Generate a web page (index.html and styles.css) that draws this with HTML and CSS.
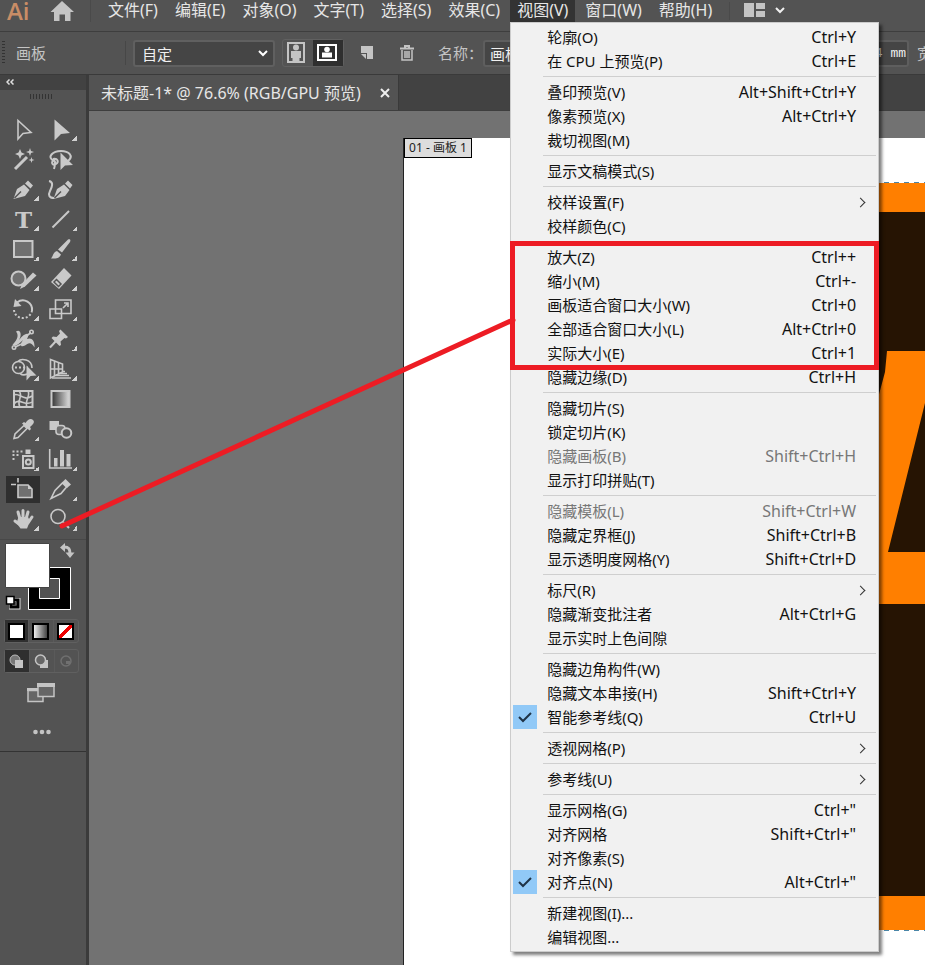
FILE: index.html
```html
<!DOCTYPE html>
<html lang="zh-CN">
<head>
<meta charset="utf-8">
<title>未标题-1</title>
<link rel="stylesheet" href="styles.css">
</head>
<body>
<header class="menubar">
  <span class="logo">Ai</span>
  <button class="home" aria-label="主页"><svg width="24" height="22" viewBox="0 0 24 22"><path d="M12 1 24 12H20.500V21H15V14.500H9.500V21H4V12H0.500Z" fill="#c4c4c4"/></svg></button>
  <nav class="menus">
    <button>文件(F)</button>
    <button>编辑(E)</button>
    <button>对象(O)</button>
    <button>文字(T)</button>
    <button>选择(S)</button>
    <button>效果(C)</button>
    <div class="open-menu">
      <button class="active" aria-expanded="true">视图(V)</button>
      <div class="dropdown" role="menu">
        <div class="group">
          <button class="item"><span>轮廓(O)</span><kbd>Ctrl+Y</kbd></button>
          <button class="item"><span>在 CPU 上预览(P)</span><kbd>Ctrl+E</kbd></button>
        </div>
        <div class="group">
          <button class="item"><span>叠印预览(V)</span><kbd>Alt+Shift+Ctrl+Y</kbd></button>
          <button class="item"><span>像素预览(X)</span><kbd>Alt+Ctrl+Y</kbd></button>
          <button class="item"><span>裁切视图(M)</span></button>
        </div>
        <div class="group">
          <button class="item"><span>显示文稿模式(S)</span></button>
        </div>
        <div class="group">
          <button class="item sub"><span>校样设置(F)</span></button>
          <button class="item"><span>校样颜色(C)</span></button>
        </div>
        <div class="group">
          <div class="marked">
            <button class="item"><span>放大(Z)</span><kbd>Ctrl++</kbd></button>
            <button class="item"><span>缩小(M)</span><kbd>Ctrl+-</kbd></button>
            <button class="item"><span>画板适合窗口大小(W)</span><kbd>Ctrl+0</kbd></button>
            <button class="item"><span>全部适合窗口大小(L)</span><kbd>Alt+Ctrl+0</kbd></button>
            <button class="item"><span>实际大小(E)</span><kbd>Ctrl+1</kbd></button>
          </div>
          <button class="item"><span>隐藏边缘(D)</span><kbd>Ctrl+H</kbd></button>
        </div>
        <div class="group">
          <button class="item"><span>隐藏切片(S)</span></button>
          <button class="item"><span>锁定切片(K)</span></button>
          <button class="item" disabled><span>隐藏画板(B)</span><kbd>Shift+Ctrl+H</kbd></button>
          <button class="item"><span>显示打印拼贴(T)</span></button>
        </div>
        <div class="group">
          <button class="item" disabled><span>隐藏模板(L)</span><kbd>Shift+Ctrl+W</kbd></button>
          <button class="item"><span>隐藏定界框(J)</span><kbd>Shift+Ctrl+B</kbd></button>
          <button class="item"><span>显示透明度网格(Y)</span><kbd>Shift+Ctrl+D</kbd></button>
        </div>
        <div class="group">
          <button class="item sub"><span>标尺(R)</span></button>
          <button class="item"><span>隐藏渐变批注者</span><kbd>Alt+Ctrl+G</kbd></button>
          <button class="item"><span>显示实时上色间隙</span></button>
        </div>
        <div class="group">
          <button class="item"><span>隐藏边角构件(W)</span></button>
          <button class="item"><span>隐藏文本串接(H)</span><kbd>Shift+Ctrl+Y</kbd></button>
          <button class="item checked"><svg class="check" viewBox="0 0 24 24"><path d="M6 12l4 4 8-8"/></svg><span>智能参考线(Q)</span><kbd>Ctrl+U</kbd></button>
        </div>
        <div class="group">
          <button class="item sub"><span>透视网格(P)</span></button>
        </div>
        <div class="group">
          <button class="item sub"><span>参考线(U)</span></button>
        </div>
        <div class="group">
          <button class="item"><span>显示网格(G)</span><kbd>Ctrl+"</kbd></button>
          <button class="item"><span>对齐网格</span><kbd>Shift+Ctrl+"</kbd></button>
          <button class="item"><span>对齐像素(S)</span></button>
          <button class="item checked"><svg class="check" viewBox="0 0 24 24"><path d="M6 12l4 4 8-8"/></svg><span>对齐点(N)</span><kbd>Alt+Ctrl+"</kbd></button>
        </div>
        <div class="group">
          <button class="item"><span>新建视图(I)...</span></button>
          <button class="item"><span>编辑视图...</span></button>
        </div>
      </div>
    </div>
    <button>窗口(W)</button>
    <button>帮助(H)</button>
  </nav>
  <button class="layout" aria-label="工作区"><svg width="44" height="16" viewBox="0 0 44 16"><path d="M0 1H10V15H0ZM12 1H21V7H12ZM12 9H21V15H12Z" fill="#c4c4c4"/><path d="M32 6l4 4 4-4" fill="none" stroke="#f0f0f0" stroke-width="2"/></svg></button>
</header>

<div class="control">
  <i class="handle"></i>
  <span class="mode">画板</span>
  <select class="preset" aria-label="预设"><option>自定</option></select>
  <div class="orient">
    <button aria-label="纵向"><svg width="30" height="26" viewBox="0 0 30 26"><rect x="5" y="3" width="16" height="19" fill="none" stroke="#c4c4c4" stroke-width="2"/><circle cx="13" cy="7.500" r="3" fill="#c4c4c4"/><path d="M8 11H18V18H16.500V21H9.500V18H8Z" fill="#c4c4c4"/></svg></button>
    <button class="on" aria-label="横向"><svg width="30" height="26" viewBox="0 0 30 26"><rect x="5" y="5" width="18" height="15" fill="none" stroke="#fff" stroke-width="2"/><circle cx="14" cy="9.500" r="2.800" fill="#fff"/><path d="M9 12.500H19V17.500H9Z" fill="#fff"/></svg></button>
  </div>
  <button class="tool-a" aria-label="新建画板"><svg width="14" height="14" viewBox="0 0 14 14"><path d="M1 0H13V13H7V7H1Z" fill="#c4c4c4"/><path d="M1 8H6V13Z" fill="#c4c4c4"/></svg></button>
  <button class="tool-b" aria-label="删除画板"><svg width="14" height="16" viewBox="0 0 14 16" fill="none" stroke="#c4c4c4"><path d="M0 3.500H14M5 3V1H9V3" stroke-width="2"/><path d="M2 5V15H12V5M5 6V13M7 6V13M9 6V13" stroke-width="1.500"/></svg></button>
  <label class="name" for="name">名称：</label>
  <input class="field" id="name" value="画板 1">
  <input class="field coord" aria-label="坐标" value="214 mm">
  <span class="width">宽</span>
</div>

<main class="work">
  <aside class="tools">
    <div class="collapse"><svg width="8" height="6" viewBox="0 0 8 6" fill="none" stroke="#ddd" stroke-width="1.500"><path d="M3.500 0.500 1 3 3.500 5.500M7.500 0.500 5 3 7.500 5.500"/></svg></div>
    <i class="grip"></i>
    <div class="grid">
      <button aria-label="选择"><svg viewBox="0 0 34 30"><path class="l w1" d="M12 6.500V25L17 19.500 25 18.500Z"/></svg></button>
      <button class="more" aria-label="直接选择"><svg viewBox="0 0 34 30"><path d="M10.500 5.500V26.500L17 20 26 19Z"/></svg></button>
      <button aria-label="魔棒"><svg viewBox="0 0 34 30"><path class="l w3" d="M9 25 21 13"/><path d="M14 5 15.500 8.500 19 10 15.500 11.500 14 15 12.500 11.500 9 10 12.500 8.500ZM24 4 25 7 28 8 25 9 24 12 23 9 20 8 23 7ZM25.500 13 26.200 15.300 28.500 16 26.200 16.700 25.500 19 24.800 16.700 22.500 16 24.800 15.300Z"/></svg></button>
      <button aria-label="套索"><svg viewBox="0 0 34 30"><path class="l" d="M10 17C2 13 9 7 17 7S30 12 24 17M9 15C14 14 15 18 12 20S7 19 9 17 12 19 10 25"/><path d="M16.500 8.500V26L21 21.500 29 21Z"/></svg></button>
      <button class="more" aria-label="钢笔"><svg viewBox="0 0 34 30"><path d="M7.500 25 11 15 18 10.500 23.500 16 19 22Z M19 9.500 22 6.500 27 11.500 24.500 14.500Z"/><path class="d" d="M8.500 24 15 17.500"/></svg></button>
      <button aria-label="曲率"><svg viewBox="0 0 34 30"><path d="M9.500 25 13 15 20 10.500 25.500 16 21 22Z M21 9.500 24 6.500 28.500 11 26 14.500Z"/><path class="d" d="M10.500 24 17 17.500"/><path class="l" d="M5 7C10 8 8 13 6 17S5 24 10 24"/></svg></button>
      <button class="more" aria-label="文字"><svg viewBox="0 0 34 30"><text x="17.500" y="24" text-anchor="middle">T</text></svg></button>
      <button class="more" aria-label="直线段"><svg viewBox="0 0 34 30"><path class="l" d="M8.500 23.500 25 7"/></svg></button>
      <button class="more" aria-label="矩形"><svg viewBox="0 0 34 30"><path class="l g" d="M8 7H26.500V23H8Z"/></svg></button>
      <button class="more" aria-label="画笔"><svg viewBox="0 0 34 30"><path d="M14 15.500 24 5.500C26 4.500 27 6 26 8L18 18.500ZM13 17 17 20.500C15 25 11 24.500 7 24.500 9 22.500 9 18 13 17Z"/></svg></button>
      <button class="more" aria-label="Shaper"><svg viewBox="0 0 34 30"><circle class="l g" cx="12.500" cy="14.500" r="7"/><path d="M14 25 16 20 27 8.500 30.500 11.500 19 22.500Z"/></svg></button>
      <button class="more" aria-label="橡皮擦"><svg viewBox="0 0 34 30"><path d="M7 18 20 4 27.500 11.500 15 25Z"/><path class="d" d="M10 18 12.500 15.500 17 20 14.500 22.500Z"/></svg></button>
      <button class="more" aria-label="旋转"><svg viewBox="0 0 34 30"><path class="l" d="M11 8.500C18 3 27 9 26 17"/><path d="M7.500 13 9 5 15.500 12Z"/><path class="l dash" d="M8 16C9 26 23 27 26 17"/></svg></button>
      <button class="more" aria-label="比例缩放"><svg viewBox="0 0 34 30"><path class="l w1" d="M11.500 6H27V19.500H11.500Z"/><path class="l w1" d="M6 15H17.500V24.500H6ZM19 14 24 9M20 9H24V13"/></svg></button>
      <button class="more" aria-label="宽度"><svg viewBox="0 0 34 30"><path d="M10 7.500C15 4.500 16 12 13 16 19 8 25 8 21 15 25 13 29 16 28.500 23.500 25 17 22 19 19 21.500 14 24 14 20 17 16 13 20 10 23 6.500 20.500 9.500 18 14 12 10 7.500Z"/><path class="l w1" d="M9 23 18 19M25 8.500 18 14"/><circle class="l w1" cx="8" cy="23.500" r="1.700"/><circle class="l w1" cx="25.500" cy="8" r="1.700"/></svg></button>
      <button class="more" aria-label="操控变形"><svg viewBox="0 0 34 30"><path d="M16.500 5.500 24 13 22 14.500 20.500 14 16.500 17.500 17 21 15.500 22 7.500 14 9 12.500 12.500 13 16 9.500 15 7Z"/><path class="l" d="M6 23.500 12 17"/></svg></button>
      <button class="more" aria-label="形状生成器"><svg viewBox="0 0 34 30"><circle class="l w1" cx="12.500" cy="13.500" r="6"/><path class="l w1" d="M12 7.500C15 4 26 5 26 14M14 19.500C16 21 19 21 21 20"/><path class="l dash" d="M9 13.500H22"/><path d="M20.500 11.500V26.500L24.500 22 30.500 21.500Z"/></svg></button>
      <button class="more" aria-label="透视网格"><svg viewBox="0 0 34 30"><path class="l w1" d="M6.500 5.500 18.500 10V18L6.500 24ZM10.500 7V22M14.500 8V20M6.500 15H18.500"/><path class="l w1" d="M18 17.500H21M15 19.500H23M12 21.500H25M8 24H27"/></svg></button>
      <button aria-label="网格"><svg viewBox="0 0 34 30"><path class="l" d="M8 7H26.500V23H8Z"/><path class="l w1" d="M13 7C18 12 10 17 14 23M22 7C25 12 18 17 21 23M8 11C13 8 18 18 26 12M8 20C13 13 20 23 26 18"/></svg></button>
      <button aria-label="渐变"><svg viewBox="0 0 34 30"><defs><linearGradient id="gt"><stop stop-color="#333"/><stop offset="1" stop-color="#ddd"/></linearGradient></defs><path d="M7.500 7H25.500V23H7.500Z" fill="url(#gt)" stroke="#c9c9c9" stroke-width="2"/></svg></button>
      <button class="more" aria-label="吸管"><svg viewBox="0 0 34 30"><path class="l w1" d="M8 24.500 9 20 18 11.500 21 14.500 12 23.500Z"/><path d="M16 9.500 18 8 19.500 9C22 5 25 4 27 6S27.500 10 24 13L25 15 23.500 16.500Z"/></svg></button>
      <button aria-label="混合"><svg viewBox="0 0 34 30"><path d="M5.500 7H15V16H5.500Z"/><rect class="l g w1" x="12" y="11.500" width="9" height="9" rx="3"/><circle class="l g2" cx="22.500" cy="19" r="4.800"/></svg></button>
      <button class="more" aria-label="符号喷枪"><svg viewBox="0 0 34 30"><path class="l" d="M17 12H27.500V24H17Z"/><path d="M19.500 5.500H24.500V10H19.500Z"/><circle class="l" cx="22.300" cy="18" r="2.500"/><path class="l dash" d="M6.500 7.500H18M6.500 11H14M6.500 15H9"/></svg></button>
      <button class="more" aria-label="图表"><svg viewBox="0 0 34 30"><path class="l w1" d="M5.700 5V24H28"/><path d="M10 14H13.500V22.500H10ZM16 6H20V22.500H16ZM22.500 10H26.500V22.500H22.500Z"/></svg></button>
      <button class="on" aria-label="画板"><svg viewBox="0 0 34 30"><path class="l w1 g" d="M12 11H22L26 15V23.500H12Z"/><path d="M22 10.500V15H26Z"/><path class="l w1" d="M5 10.500H10M12 4V8.500"/></svg></button>
      <button class="more" aria-label="切片"><svg viewBox="0 0 34 30"><path class="l w1" d="M7 24.500 11 16.500 18.500 9 22.500 13 17 19.500Z"/><path d="M18 8.500 21.500 5 27 10.500 23 14Z"/></svg></button>
      <button class="more" aria-label="抓手"><svg viewBox="0 0 34 30"><path class="l w3" stroke-linecap="round" d="M12 8 14 15M17 6.500V15M22 8 20 15M26 13 22 19M9 17 13 20"/><path d="M12.500 13H22L24 17 21 24.500H14.500L10.500 19Z"/></svg></button>
      <button class="more" aria-label="缩放"><svg viewBox="0 0 34 30"><circle class="l w1" cx="14" cy="12.500" r="7"/><path class="l" d="M19 18 25 24"/></svg></button>
    </div>
    <svg class="swatches" viewBox="0 0 86 76" role="img" aria-label="填色和描边">
      <path d="M28.500 27.500H70.500V69.500H28.500Z" fill="#000" stroke="#fff"/>
      <path d="M39.500 38.500H59.500V58.500H39.500Z" fill="#535353" stroke="#fff"/>
      <path d="M5.500 3.500H49.500V47.500H5.500Z" fill="#fff" stroke="#444"/>
      <path d="M64 7C69 7 70 9 70 14" fill="none" stroke="#c4c4c4" stroke-width="3"/><path d="M60 7.500 65 3V12ZM65.500 12.500H74.500L70 18Z" fill="#c4c4c4"/>
      <path d="M11 60H18.500V67.500H11Z" fill="none" stroke="#ddd" stroke-width="4"/><path d="M11 60H18V67H11Z" fill="none" stroke="#000" stroke-width="3"/><path d="M6.500 56.500H14V64H6.500Z" fill="#fff" stroke="#000" stroke-width="1.500"/>
    </svg>
    <div class="seg">
      <button class="on" aria-label="颜色"><i class="chip"></i></button>
      <button aria-label="渐变"><i class="chip grad"></i></button>
      <button aria-label="无"><i class="chip none"></i></button>
    </div>
    <div class="seg draw">
      <button class="on" aria-label="正常绘图"><svg viewBox="0 0 24 22"><circle cx="10" cy="10" r="5" fill="#777" stroke="#bbb"/><path d="M10 10H18V18H10Z" fill="#c4c4c4"/></svg></button>
      <button aria-label="背面绘图"><svg viewBox="0 0 24 22"><path d="M10 10H18V18H10Z" fill="#c4c4c4"/><circle cx="10.500" cy="10" r="5" fill="#666" stroke="#c4c4c4" stroke-width="1.500"/></svg></button>
      <button disabled aria-label="内部绘图"><svg viewBox="0 0 24 22"><circle cx="11" cy="11" r="5" fill="none" stroke="#707070" stroke-width="1.500"/><path d="M11 11H15V14H11Z" fill="#707070"/></svg></button>
    </div>
    <button class="screen" aria-label="更改屏幕模式"><svg width="28" height="20" viewBox="0 0 28 20"><path d="M1 7.500H16V18.500H1Z" fill="#666" stroke="#c4c4c4" stroke-width="1.500"/><path d="M0 5H11V8H0Z" fill="#c4c4c4"/><path d="M11 1.500H27V13.500H11Z" fill="#666" stroke="#c4c4c4" stroke-width="1.500"/><path d="M10 0H28V4H10Z" fill="#c4c4c4"/></svg></button>
    <button class="dots" aria-label="编辑工具栏"><svg width="18" height="6" viewBox="0 0 18 6" fill="#c4c4c4"><circle cx="2.500" cy="3" r="2.300"/><circle cx="9" cy="3" r="2.300"/><circle cx="15.500" cy="3" r="2.300"/></svg></button>
  </aside>
  <section class="doc">
    <div class="tabs"><div class="tab"><span>未标题-1* @ 76.6% (RGB/GPU 预览)</span><button aria-label="关闭"><svg width="10" height="10" viewBox="0 0 10 10"><path d="M1 1 9 9M9 1 1 9" stroke="#eee" stroke-width="2"/></svg></button></div></div>
    <div class="canvas">
      <div class="artboard">
        <span class="board-name">01 - 画板 1</span>
        <svg class="art" viewBox="100 0 321 750">
          <path d="M0 0H421V748H0Z" fill="#ff7f00"/>
          <path d="M0 30H421V169H383L381 190 374 216H0Z" fill="#261403"/>
          <path d="M421 221 384 370H421ZM0 422H421V714H0Z" fill="#261403"/>
          <path d="M0 0.500H421M0 748.500H421" stroke="#fff"/>
          <path d="M0 0.500H421M0 748.500H421" stroke="#4a86a8" stroke-dasharray="5 5"/>
        </svg>
      </div>
    </div>
  </section>
</main>
<svg class="pointer" width="520" height="540" viewBox="0 0 520 540"><path d="M62 526 513 320" stroke="#ed1c24" stroke-width="5" stroke-linecap="round"/></svg>
</body>
</html>
```
FILE: styles.css
```css
* { box-sizing: border-box; }
body {
  margin: 0;
  height: 100vh;
  display: flex;
  flex-direction: column;
  position: relative;
  overflow: hidden;
  background: #535353;
  color: #e6e6e6;
  font: 15px/24px "Noto Sans", "Noto Sans CJK SC", sans-serif;
}
button, input, select { font: inherit; color: inherit; }
button { background: none; border: 0; padding: 0; text-align: left; white-space: nowrap; }
svg { display: block; }

.menubar { display: flex; align-items: center; flex: none; height: 32px; padding-bottom: 9px; border-bottom: 1px solid #3e3e3e; }
.logo { width: 43px; padding-left: 7px; color: #c98d66; font: 600 24px/22px "Open Sans", sans-serif; }
.home { width: 47px; padding-left: 7px; }
.menus { display: flex; gap: 3px; padding: 0 10px; border-left: 1px solid #4a4a4a; }
.menus > button, .active { height: 22px; line-height: 20px; padding: 0 7px 2px; font-size: 16px; }
.active { display: block; background: #333; }
.open-menu { position: relative; }
.layout { padding: 0 0 2px 14px; border-left: 1px solid #4a4a4a; }

.dropdown {
  position: absolute;
  z-index: 5;
  top: 22px;
  left: 0;
  width: 369px;
  padding: 2px;
  background: #f1f1f1;
  border: 1px solid #ccc;
  box-shadow: 3px 3px 3px rgba(0, 0, 0, .5);
  color: #111;
}
.group + .group { padding-top: 7px; background: linear-gradient(#cfcfcf, #cfcfcf) 30px 3px / 333px 1px no-repeat; }
.item { position: relative; display: flex; width: 100%; height: 24px; padding: 0 20px 0 34px; justify-content: space-between; align-items: center; }
.item:disabled { color: #777; }
.item kbd { font: inherit; font-size: 16px; }
.sub::after { content: ""; width: 6px; height: 6px; margin-right: -8px; border: solid #333; border-width: 1px 1px 0 0; transform: rotate(45deg); }
.check { position: absolute; left: 0; top: 0; width: 24px; height: 24px; background: #91c9f7; fill: none; stroke: #1f3347; stroke-width: 2; }
.marked { position: relative; }
.marked::after { content: ""; position: absolute; inset: -4px -3px -5px; border: 5px solid #ed1c24; pointer-events: none; }

.control { display: flex; align-items: center; flex: none; height: 43px; border-bottom: 1px solid #3a3a3a; color: #c4c4c4; overflow: hidden; }
.handle { width: 3px; height: 24px; margin-left: 2px; background: repeating-linear-gradient(#333 0 1px, transparent 1px 3px); }
.mode { flex: none; width: 110px; height: 24px; margin: 0 7px 0 11px; border-right: 1px solid #474747; }
.preset {
  appearance: none;
  flex: none;
  width: 142px;
  height: 27px;
  padding: 0 7px;
  border: 2px solid #606060;
  border-radius: 3px;
  color: #f0f0f0;
  background: #454545 url("data:image/svg+xml,%3Csvg xmlns='http://www.w3.org/2000/svg' width='12' height='8'%3E%3Cpath d='M2 2l4 4 4-4' fill='none' stroke='%23fff' stroke-width='2'/%3E%3C/svg%3E") right 4px center no-repeat;
}
.orient { display: flex; flex: none; margin-left: 7px; border: 1px solid #606060; border-radius: 3px; }
.on { background: #2f2f2f; }
.tool-a { margin-left: 16px; }
.tool-b { margin-left: 26px; }
.name { margin-left: 24px; flex: none; }
.field { width: 130px; height: 27px; padding: 0 5px; border: 2px solid #5e5e5e; border-radius: 3px; background: #454545; color: #f0f0f0; }
.coord { width: 80px; margin-left: auto; padding: 0 1px; text-align: right; font-family: "Liberation Mono", monospace; font-size: 13px; }
.width { width: 8px; margin-left: 8px; flex: none; overflow: hidden; white-space: nowrap; }

.work { flex: 1; display: flex; min-height: 0; }
.tools { width: 89px; flex: none; border-right: 3px solid #3b3b3b; }
.collapse { height: 15px; padding: 4px 6px; background: #424242; }
.grip { display: block; width: 24px; height: 5px; margin: 4px 0 15px 30px; background: repeating-linear-gradient(90deg, #333 0 1px, transparent 1px 3px); }
.grid { display: grid; grid-template-columns: 34px 34px; column-gap: 4px; padding: 0 6px; border-bottom: 1px solid #484848; height: 426px; align-content: start; }
.grid button { position: relative; height: 30px; }
.grid svg { width: 34px; height: 30px; fill: #c9c9c9; }
.grid text { font: bold 23px "DejaVu Serif", serif; }
.grid .on { background: linear-gradient(#2f2f2f, #2f2f2f) 0 2px / 34px 27px no-repeat; }
.more::after { content: ""; position: absolute; left: 28px; top: 22px; width: 5px; height: 5px; background: linear-gradient(135deg, transparent 50%, #d0d0d0 50%); }
.grid .l { fill: none; stroke: #c9c9c9; stroke-width: 2; }
.grid .w1 { stroke-width: 1.6; }
.grid .w3 { stroke-width: 3; }
.grid .g { fill: #707070; }
.grid .g2 { fill: #535353; }
.grid .dash { stroke-dasharray: 2 2; }
.grid .d { fill: none; stroke: #535353; stroke-width: 1.5; }
.swatches { width: 86px; height: 76px; }
.seg { display: grid; grid-template-columns: repeat(3, 1fr); width: 75px; height: 24px; margin: 3px 0 0 4px; border: 1px solid #606060; border-radius: 3px; }
.seg button { display: grid; place-items: center; border-right: 1px solid #5a5a5a; }
.seg button:last-child { border-right: 0; }
.chip { width: 17px; height: 17px; background: #fff; border: 2px solid #000; }
.grad { background: linear-gradient(90deg, #eee, #444); }
.none { background: linear-gradient(135deg, #fff 40%, #e00 40% 60%, #fff 60%); }
.draw { margin-top: 6px; }
.draw svg { width: 24px; height: 22px; }
.screen { display: block; margin: 10px 0 0 27px; }
.dots { display: block; width: 86px; height: 49px; padding: 10px 0 0 33px; border-bottom: 1px solid #333; }

.doc { flex: 1; min-width: 0; display: flex; flex-direction: column; }
.tabs { display: flex; flex: none; height: 36px; background: #424242; border-bottom: 1px solid #3e3e3e; }
.tab { display: flex; align-items: center; gap: 19px; padding: 0 8px 0 12px; background: #535353; border-right: 1px solid #3a3a3a; font-size: 16px; white-space: nowrap; }
.canvas { flex: 1; min-height: 0; padding: 27px 0 0 314px; background: #727272; }
.artboard { height: 100%; background: #fff; border-left: 1px solid #222; overflow: hidden; }
.board-name { display: block; width: 68px; height: 20px; border: 1px solid #000; background: #ddd; color: #222; font-size: 12px; line-height: 17px; text-align: center; white-space: nowrap; }
.art { width: 321px; height: 750px; margin: 24px 0 0 200px; }
.pointer { position: absolute; z-index: 6; left: 0; top: 0; pointer-events: none; }
```
